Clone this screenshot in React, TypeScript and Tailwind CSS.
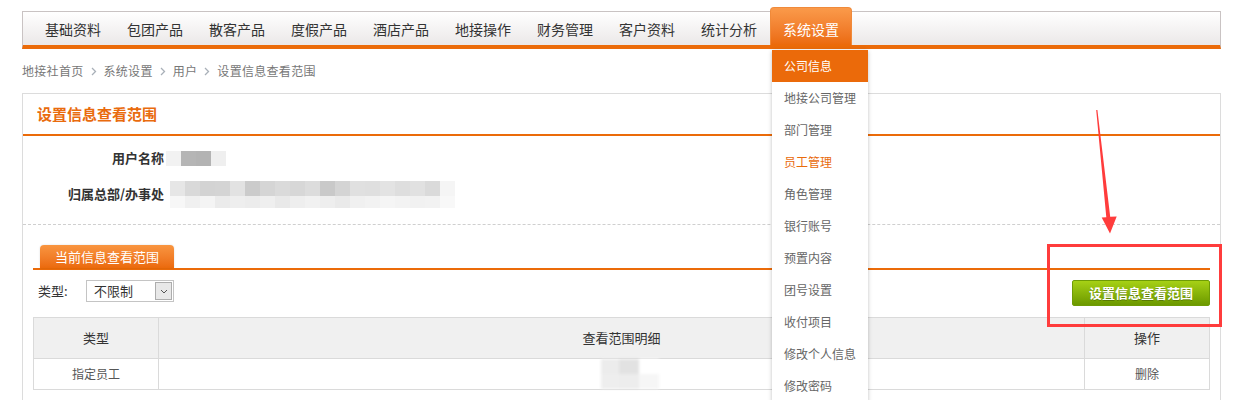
import React from "react";

const navItems = ["基础资料", "包团产品", "散客产品", "度假产品", "酒店产品", "地接操作", "财务管理", "客户资料", "统计分析", "系统设置"];

const menuItems = ["公司信息", "地接公司管理", "部门管理", "员工管理", "角色管理", "银行账号", "预置内容", "团号设置", "收付项目", "修改个人信息", "修改密码"];

const crumbs = ["地接社首页", "系统设置", "用户", "设置信息查看范围"];

// pixelated placeholder values (masked data)
const nameBlocks = ["#f2f2f2", "#b5b5b5", "#b3b3b3", "#efefef"];
const deptTop = ["#e6e6e6", "#d9d9d9", "#d3d3d3", "#d4d4d4", "#e2e2e2", "#cbcbcb", "#d5d5d5", "#dadada", "#d7d7d7", "#dcdcdc", "#c9c9c9", "#d4d4d4", "#e0e0e0", "#dfdfdf", "#e3e3e3", "#dedede", "#e1e1e1", "#dadada", "#f5f5f5"];
const deptBottom = ["#f7f7f7", "#f0f0f0", "#f4f4f4", "#ebebeb", "#eeeeee", "#ececec", "#efefef", "#e9e9e9", "#eeeeee", "#f1f1f1", "#eeeeee", "#eaeaea", "#f0f0f0", "#f2f2f2", "#f5f5f5", "#f3f3f3", "#f1f1f1", "#f2f2f2", "#f8f8f8"];

function Chevron() {
  return (
    <svg width="6" height="9" viewBox="0 0 6 9" className="mx-[7px]">
      <path d="M1 1 L4.5 4.5 L1 8" fill="none" stroke="#a9b0b8" strokeWidth="1.3" />
    </svg>
  );
}

export default function App() {
  return (
    <div className="relative min-h-[400px] overflow-hidden bg-white pl-[22px] pr-[20px] pt-[11px] font-['Microsoft_YaHei','Noto_Sans_CJK_SC',sans-serif]">
      {/* top navigation */}
      <div className="flex h-[38px] border-x border-t border-[#c9c3c3] border-b-4 border-b-[#eb6b09] bg-gradient-to-b from-white to-[#ebe8e8] pl-[9px]">
        {navItems.map((item, i) =>
          i === navItems.length - 1 ? (
            <div
              key={item}
              className="-mt-[5px] flex items-center rounded-t-[4px] border border-b-0 border-[#f08a3a] bg-gradient-to-b from-[#fa9a4a] to-[#eb6a0a] px-[12px] pt-[5px] text-[14px] leading-[14px] text-white"
            >
              {item}
            </div>
          ) : (
            <div key={item} className="flex items-center px-[13px] text-[14px] leading-[14px] text-[#333]">
              {item}
            </div>
          )
        )}
      </div>

      {/* breadcrumb */}
      <div className="flex h-[44px] items-center text-[12px] tracking-[0.3px] text-[#777]">
        {crumbs.map((c, i) => (
          <React.Fragment key={c}>
            {i > 0 && <Chevron />}
            <span>{c}</span>
          </React.Fragment>
        ))}
      </div>

      {/* main panel */}
      <div className="border border-[#dcdcdc] pb-[20px]">
        <div className="flex h-[42px] items-center border-b-2 border-[#eb6b09] pl-[14px] text-[15px] font-bold text-[#e96b0d]">
          设置信息查看范围
        </div>

        <div className="border-b border-dashed border-[#cfcfcf] pb-[18px] pt-[10px]">
          <div className="flex h-[24px] items-center">
            <div className="w-[141px] text-right text-[13px] font-bold text-[#333]">用户名称</div>
            <div className="ml-[2px] flex h-[15px]">
              {nameBlocks.map((c, i) => (
                <div key={i} className="h-full w-[15px]" style={{ background: c }} />
              ))}
            </div>
          </div>
          <div className="mt-[12px] flex h-[24px] items-center">
            <div className="w-[141px] text-right text-[13px] font-bold text-[#333]">归属总部/办事处</div>
            <div className="ml-[6px] flex flex-col blur-[0.6px]">
              <div className="flex h-[15px]">
                {deptTop.map((c, i) => (
                  <div key={i} className="h-full w-[15px]" style={{ background: c }} />
                ))}
              </div>
              <div className="flex h-[12px]">
                {deptBottom.map((c, i) => (
                  <div key={i} className="h-full w-[15px]" style={{ background: c }} />
                ))}
              </div>
            </div>
          </div>
        </div>

        <div className="mx-[10px] mt-[20px]">
          {/* tab strip */}
          <div className="flex border-b-2 border-[#eb6b09] pl-[7px]">
            <div className="flex h-[23px] w-[134px] items-center justify-center rounded-t-[4px] bg-gradient-to-b from-[#f9953f] to-[#eb6a0b] text-[13px] text-white shadow-[0_0_2px_rgba(0,0,0,0.15)]">
              当前信息查看范围
            </div>
          </div>

          {/* filter row */}
          <div className="mt-[10px] flex items-start justify-between">
            <div className="flex items-center">
              <span className="ml-[5px] w-[48px] text-[13px] leading-[22px] text-[#333]">类型:</span>
              <div className="flex h-[22px] w-[88px] items-stretch border border-[#c4c4c4] bg-white">
                <span className="flex-1 pl-[7px] text-[13px] leading-[20px] text-[#333]">不限制</span>
                <div className="m-px flex w-[17px] items-center justify-center border border-[#adadad] bg-[#e8e8e8]">
                  <svg width="8" height="5" viewBox="0 0 8 5">
                    <path d="M1 1 L4 4 L7 1" fill="none" stroke="#555" strokeWidth="1" />
                  </svg>
                </div>
              </div>
            </div>
            <button className="flex h-[26px] w-[138px] items-center justify-center rounded-[2px] border border-[#6f9c05] bg-gradient-to-b from-[#a6d115] to-[#6c9900] text-[13px] font-bold text-white [text-shadow:0_1px_0_rgba(0,0,0,0.25)]">
              设置信息查看范围
            </button>
          </div>

          {/* scope table */}
          <table className="mt-[11px] w-full table-fixed border-collapse text-center">
            <colgroup>
              <col className="w-[125px]" />
              <col />
              <col className="w-[125px]" />
            </colgroup>
            <thead>
              <tr className="h-[41px] bg-[#f0f0f0] text-[13px] text-[#333]">
                <th className="border border-[#dadada] font-normal">类型</th>
                <th className="border border-[#dadada] font-normal">查看范围明细</th>
                <th className="border border-[#dadada] font-normal">操作</th>
              </tr>
            </thead>
            <tbody>
              <tr className="h-[31px] text-[12px] text-[#555]">
                <td className="border border-[#dadada]">指定员工</td>
                <td className="border border-[#dadada]">
                  <div className="ml-[442px] flex w-[58px] flex-col blur-[1.5px]">
                    <div className="flex h-[15px]">
                      <div className="w-[18px] bg-[#ececec]" />
                      <div className="w-[20px] bg-[#e2e2e2]" />
                      <div className="w-[20px] bg-white" />
                    </div>
                    <div className="flex h-[15px]">
                      <div className="w-[18px] bg-[#eeeeee]" />
                      <div className="w-[20px] bg-[#ededed]" />
                      <div className="w-[20px] bg-[#f6f6f6]" />
                    </div>
                  </div>
                </td>
                <td className="border border-[#dadada]">删除</td>
              </tr>
            </tbody>
          </table>
        </div>
      </div>

      {/* system settings dropdown */}
      <div className="absolute left-[772px] top-[50px] w-[96px] bg-white shadow-[0_1px_4px_rgba(0,0,0,0.25)]">
        {menuItems.map((m, i) => (
          <div
            key={m}
            className={
              i === 0
                ? "flex h-[32px] items-center bg-[#eb6a0a] pl-[12px] text-[12px] text-white"
                : i === 3
                ? "flex h-[32px] items-center pl-[12px] text-[12px] text-[#e96b0d]"
                : "flex h-[32px] items-center pl-[12px] text-[12px] text-[#666]"
            }
          >
            {m}
          </div>
        ))}
      </div>

      {/* red callout */}
      <div className="pointer-events-none absolute left-[1047px] top-[244px] h-[83px] w-[175px] border-[3px] border-[#ff3c3c]" />
      <svg className="pointer-events-none absolute left-[1090px] top-[105px]" width="35" height="135" viewBox="0 0 35 135">
        <polygon points="6.2,5 7.4,5 20.2,111.8 26.7,111.4 20,128.5 11.7,112.6 16.3,112.2" fill="#ff3c3c" />
      </svg>
    </div>
  );
}
